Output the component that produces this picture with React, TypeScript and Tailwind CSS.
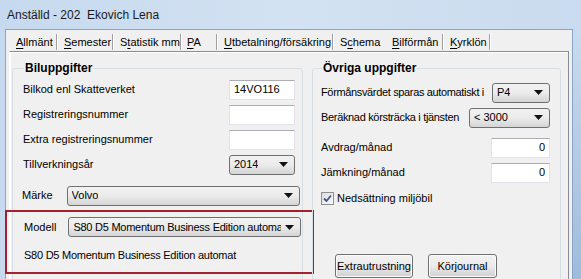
import React from 'react';

const font = { fontFamily: '"Liberation Sans", Arial, sans-serif' };

type Tab = { label: string; key: number; w: number; sep: boolean; selected?: boolean };

const tabs: Tab[] = [
  { label: 'Allmänt', key: 0, w: 48, sep: true },
  { label: 'Semester', key: 0, w: 56, sep: true },
  { label: 'Statistik mm', key: 1, w: 67, sep: true },
  { label: 'PA', key: 0, w: 37, sep: true },
  { label: 'Utbetalning/försäkring', key: 0, w: 116, sep: true },
  { label: 'Schema', key: 1, w: 52, sep: false },
  { label: 'Bilförmån', key: 0, w: 58, sep: true, selected: true },
  { label: 'Kyrklön', key: 0, w: 47, sep: true },
];

const TabLabel = ({ label, k }: { label: string; k: number }) => (
  <span className="whitespace-nowrap">
    {label.slice(0, k)}
    <span className="underline underline-offset-2">{label[k]}</span>
    {label.slice(k + 1)}
  </span>
);

const Arrow = () => (
  <svg width="9" height="5" viewBox="0 0 9 5" className="shrink-0">
    <path d="M0 0 H9 L4.5 5 Z" fill="#111" />
  </svg>
);

const TextBox = ({ value = '', right = false, w }: { value?: string; right?: boolean; w: string }) => (
  <div
    className={`${w} h-[20px] shrink-0 bg-white border border-[#e2e3ea] border-t-[#abadb3] flex items-center px-[4px] text-black ${right ? 'justify-end' : ''}`}
  >
    {value}
  </div>
);

const Combo = ({ value, w, tight = false }: { value: string; w: string; tight?: boolean }) => (
  <div
    className={`${w} h-[20px] shrink-0 rounded-[3px] border border-[#707070] bg-gradient-to-b from-[#f2f2f2] via-[#ebebeb] to-[#d4d4d4] flex items-center justify-between gap-[4px] pl-[4px] pr-[6px] text-black overflow-hidden whitespace-nowrap`}
  >
    <span className={`overflow-hidden ${tight ? 'tracking-[-0.25px]' : ''}`}>{value}</span>
    <Arrow />
  </div>
);

const Button = ({ label, w }: { label: string; w: string }) => (
  <div
    className={`${w} h-[24px] shrink-0 rounded-[3px] border border-[#707070] bg-gradient-to-b from-[#f2f2f2] via-[#ebebeb] to-[#d0d0d0] flex items-center justify-center text-black whitespace-nowrap shadow-[inset_0_0_0_1px_#fcfcfc]`}
  >
    {label}
  </div>
);

export default function App() {
  return (
    <div
      className="w-[581px] h-[279px] overflow-hidden bg-gradient-to-r from-[#c6d9ee] via-[#d3e2f2] to-[#c9dbee] flex flex-col text-black"
      style={font}
    >
      {/* title bar */}
      <div className="h-[29px] shrink-0 flex items-center pl-[7px] pt-[1px] text-[12px] text-[#1a1a1a]">
        Anställd - 202&nbsp;&nbsp;Ekovich Lena
      </div>

      <div className="flex flex-1 min-h-0">
        <div className="w-[6px] shrink-0 border-r border-[#8ba5c4]" />

        {/* window client */}
        <div className="w-[566px] shrink-0 bg-[#f0f0f0] border-t border-[#a0a0a0] flex flex-col text-[11px]">
          {/* tab strip */}
          <div className="h-[21px] shrink-0 flex items-start pl-[4px] pt-[4px]">
            {tabs.map((t) => (
              <div
                key={t.label}
                className="h-[17px] shrink-0 flex items-start justify-between pl-[6px]"
                style={{ width: t.w }}
              >
                <TabLabel label={t.label} k={t.key} />
                {t.sep && (
                  <div className="h-[16px] w-[2px] flex">
                    <div className="w-px bg-[#a0a0a0]" />
                    <div className="w-px bg-white" />
                  </div>
                )}
              </div>
            ))}
          </div>

          {/* tab panel */}
          <div className="flex-1 ml-[3px] mr-[3px] border-t border-l border-r border-[#898c95] border-l-white shadow-[inset_1px_1px_0_#ffffff] flex gap-[9px] pl-[2px] pt-[9px]">
            {/* Biluppgifter */}
            <fieldset className="w-[291px] min-w-0 h-[260px] shrink-0 border border-[#d5dfe5] rounded-[3px] pl-[10px] pr-[7px] pt-[2px]">
              <legend className="px-[1px] ml-[1px] font-bold text-[12px] leading-[14px]">Biluppgifter</legend>
              <div className="flex flex-col">
                {[
                  ['Bilkod enl Skatteverket', '14VO116'],
                  ['Registreringsnummer', ''],
                  ['Extra registreringsnummer', ''],
                ].map(([l, v]) => (
                  <div key={l} className="h-[25px] flex items-center justify-between">
                    <span className="whitespace-nowrap">{l}</span>
                    <TextBox value={v} w="w-[66px]" />
                  </div>
                ))}
                <div className="h-[25px] flex items-center justify-between">
                  <span>Tillverkningsår</span>
                  <Combo value="2014" w="w-[66px]" />
                </div>
                <div className="h-[25px] mt-[6px] flex items-center gap-[14px] -ml-[1px]">
                  <span>Märke</span>
                  <Combo value="Volvo" w="w-[233px]" />
                </div>
                <div className="-ml-[18px] -mr-[19px] mt-[2px] h-[64px] border-2 border-[#a4202a] pl-[17px] pt-[4px]">
                  <div className="h-[22px] flex items-center gap-[12px]">
                    <span>Modell</span>
                    <Combo value="S80 D5 Momentum Business Edition automa" w="w-[233px]" tight />
                  </div>
                  <div className="mt-[9px] whitespace-nowrap tracking-[-0.25px]">
                    S80 D5 Momentum Business Edition automat
                  </div>
                </div>
              </div>
            </fieldset>

            {/* Övriga uppgifter */}
            <fieldset className="w-[249px] min-w-0 h-[260px] shrink-0 border border-[#d5dfe5] rounded-[3px] pl-[8px] pr-[10px] pt-[2px]">
              <legend className="px-[1px] ml-[1px] font-bold text-[12px] leading-[14px]">Övriga uppgifter</legend>
              <div className="flex flex-col">
                <div className="h-[25px] mt-[3px] flex items-center justify-between">
                  <span className="whitespace-nowrap tracking-[-0.35px]">Förmånsvärdet sparas automatiskt i</span>
                  <Combo value="P4" w="w-[58px]" />
                </div>
                <div className="h-[25px] flex items-center justify-between">
                  <span className="whitespace-nowrap tracking-[-0.33px]">Beräknad körsträcka i tjänsten</span>
                  <Combo value="< 3000" w="w-[81px]" />
                </div>
                <div className="h-[25px] mt-[5px] flex items-center justify-between">
                  <span>Avdrag/månad</span>
                  <TextBox value="0" right w="w-[59px]" />
                </div>
                <div className="h-[25px] flex items-center justify-between">
                  <span>Jämkning/månad</span>
                  <TextBox value="0" right w="w-[59px]" />
                </div>
                <div className="h-[20px] mt-[3px] flex items-center gap-[3px]">
                  <div className="w-[13px] h-[13px] border border-[#8f8f8f] bg-gradient-to-br from-[#dcdcdc] to-[#fbfbfb] flex items-center justify-center">
                    <svg width="9" height="9" viewBox="0 0 9 9">
                      <path d="M1 4.5 L3.5 7 L8 1.5" fill="none" stroke="#3c5489" strokeWidth="1.8" />
                    </svg>
                  </div>
                  <span className="whitespace-nowrap">Nedsättning miljöbil</span>
                </div>
                <div className="mt-[46px] flex gap-[15px] pl-[14px]">
                  <Button label="Extrautrustning" w="w-[78px]" />
                  <Button label="Körjournal" w="w-[69px]" />
                </div>
              </div>
            </fieldset>
          </div>
        </div>

        {/* right frame */}
        <div className="flex-1 border-l border-[#8ba5c4] bg-gradient-to-b from-[#c9dbee] to-[#9fbbdc]" />
      </div>
    </div>
  );
}
